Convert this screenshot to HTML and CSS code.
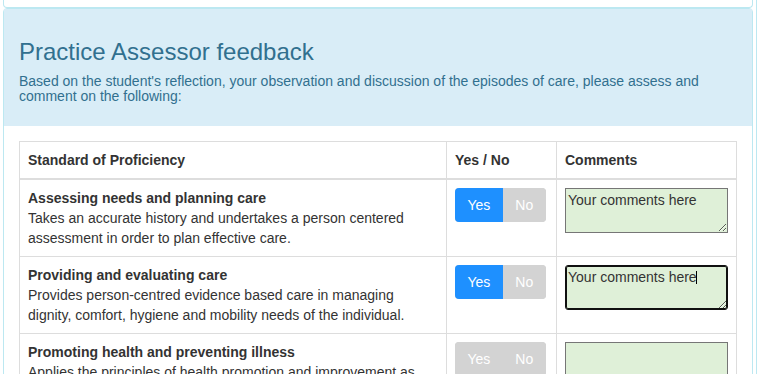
FILE: index.html
```html
<!DOCTYPE html>
<html>
<head>
<meta charset="utf-8">
<link rel="stylesheet" href="styles.css">
</head>
<body>
<div class="frame">
  <div class="panel-top"></div>
  <section class="panel">
    <header class="panel-heading">
      <h3 class="panel-title">Practice Assessor feedback</h3>
      <p class="panel-intro">Based on the student's reflection, your observation and discussion of the episodes of care, please assess and comment on the following:</p>
    </header>
    <div class="panel-body">
      <table class="grid">
        <thead>
          <tr>
            <th class="col-std">Standard of Proficiency</th>
            <th class="col-yn">Yes / No</th>
            <th class="col-cm">Comments</th>
          </tr>
        </thead>
        <tbody>
          <tr>
            <td>
              <div class="std-title">Assessing needs and planning care</div>
              <div class="std-desc">Takes an accurate history and undertakes a person centered assessment in order to plan effective care.</div>
            </td>
            <td>
              <div class="toggle"><span class="opt yes on">Yes</span><span class="opt no">No</span></div>
            </td>
            <td>
              <textarea class="comment">Your comments here</textarea>
            </td>
          </tr>
          <tr>
            <td>
              <div class="std-title">Providing and evaluating care</div>
              <div class="std-desc">Provides person-centred evidence based care in managing dignity, comfort, hygiene and mobility needs of the individual.</div>
            </td>
            <td>
              <div class="toggle"><span class="opt yes on">Yes</span><span class="opt no">No</span></div>
            </td>
            <td>
              <div class="comment-wrap">
                <textarea class="comment focused">Your comments here</textarea>
                <span class="caret"></span>
              </div>
            </td>
          </tr>
          <tr>
            <td>
              <div class="std-title">Promoting health and preventing illness</div>
              <div class="std-desc">Applies the principles of health promotion and improvement as part of person-centred care and shares information accordingly.</div>
            </td>
            <td>
              <div class="toggle"><span class="opt yes">Yes</span><span class="opt no">No</span></div>
            </td>
            <td>
              <textarea class="comment"></textarea>
            </td>
          </tr>
        </tbody>
      </table>
    </div>
  </section>
</div>
</body>
</html>
```

FILE: styles.css
```css
html, body {
  margin: 0;
  padding: 0;
  overflow: hidden;
  background: #fff;
}

body {
  font-family: "Liberation Sans", Arial, Helvetica, sans-serif;
  font-size: 14px;
  line-height: 20px;
  color: #333;
}

.frame {
  width: 757px;
  height: 374px;
  border-right: 1px solid #bce8f1;
  padding-left: 3px;
  box-sizing: border-box;
  overflow: hidden;
}

.panel-top {
  width: 750px;
  height: 8px;
  box-sizing: border-box;
  border: 1px solid #bce8f1;
  border-top: none;
  border-radius: 0 0 4px 4px;
  background: #fff;
}

.panel {
  width: 750px;
  box-sizing: border-box;
  border: 1px solid #bce8f1;
  border-radius: 4px 4px 0 0;
  background: #fff;
}

.panel-heading {
  background: #d9edf7;
  color: #31708f;
  padding: 10px 15px;
  height: 117px;
  box-sizing: border-box;
}

.panel-title {
  margin: 20px 0 0;
  font-size: 24px;
  font-weight: normal;
  line-height: 26.4px;
}

.panel-intro {
  margin: 9px 0 0;
  font-size: 14px;
  line-height: 15px;
}

.panel-body {
  padding: 15px;
}

.grid {
  width: 100%;
  border-collapse: collapse;
  border: 1px solid #ddd;
}

.grid th,
.grid td {
  border: 1px solid #ddd;
  padding: 8px;
  text-align: left;
  vertical-align: top;
  line-height: 20px;
}

.grid thead th {
  border-bottom-width: 2px;
  font-weight: bold;
}

.col-yn { width: 93px; }
.col-cm { width: 162px; }

.std-title {
  font-weight: bold;
}

.toggle {
  display: inline-flex;
  height: 34px;
  border-radius: 4px;
  overflow: hidden;
  background: #d3d3d3;
}

.opt {
  display: flex;
  align-items: center;
  justify-content: center;
  padding: 0 12.5px;
  color: #fff;
  font-size: 14px;
  background: #d3d3d3;
}

.opt.on {
  background: #1e90ff;
}

.comment {
  display: block;
  width: 163px;
  height: 45px;
  box-sizing: border-box;
  margin: 0;
  padding: 1px 2px;
  border: 1px solid #767676;
  border-radius: 0;
  background: #dff0d8;
  font-family: "Liberation Sans", Arial, Helvetica, sans-serif;
  font-size: 14px;
  line-height: 20px;
  color: #333;
  resize: vertical;
  overflow: hidden;
}

.comment.focused {
  border-color: #101010;
  box-shadow: inset 0 0 0 1px #101010;
  border-radius: 3px;
}

.comment-wrap {
  position: relative;
  width: 163px;
}

.caret {
  position: absolute;
  left: 131px;
  top: 6px;
  width: 1px;
  height: 13px;
  background: #000;
}
```
